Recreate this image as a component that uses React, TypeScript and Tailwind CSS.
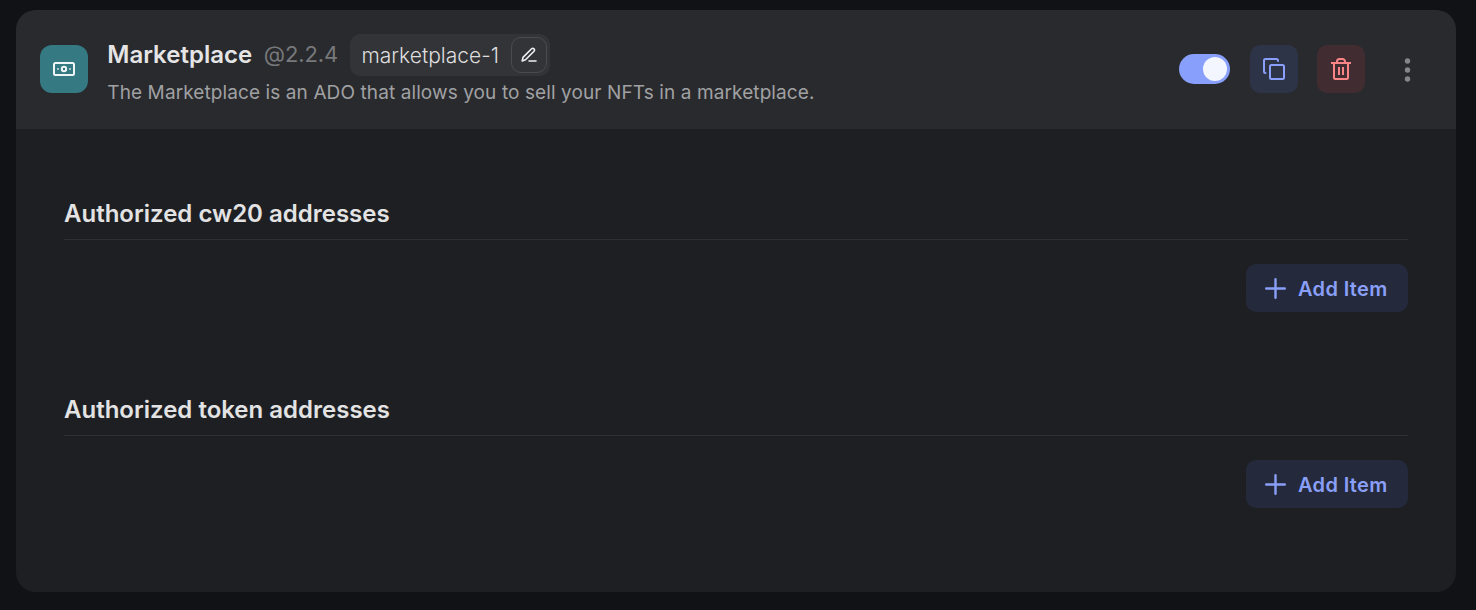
import type { ReactNode } from "react";

function Section({ title, children }: { title: string; children?: ReactNode }) {
  return (
    <section className="h-[196px]">
      <h2 className="h-[38px] border-b border-[#2f3033] text-[24px] leading-6 font-semibold text-[#e3e3e4]">
        {title}
      </h2>
      {children}
      <div className="mt-6 flex justify-end">
        <button className="flex h-12 w-[162px] items-center rounded-[10px] bg-[#242a3b] pl-[19px] text-[20px] font-semibold text-[#8a9ff9]">
          <svg width="21" height="21" viewBox="0 0 21 21" fill="none" stroke="currentColor" strokeWidth="2.4" strokeLinecap="round">
            <path d="M10.500 1.200v18.600M1.200 10.500h18.600" />
          </svg>
          <span className="ml-3 pt-px tracking-[0.35px] whitespace-nowrap">Add Item</span>
        </button>
      </div>
    </section>
  );
}

export default function App() {
  return (
    <main className="h-[610px] bg-[#111216] px-[16px] pt-[10px] pr-[20px] font-['Inter',sans-serif]">
      <div className="h-[582px] w-[1440px] overflow-hidden rounded-[20px] bg-[#1e1f23]">
        <header className="flex h-[119px] items-center bg-[#292a2d] pb-px pl-6">
          <div className="flex size-12 shrink-0 items-center justify-center rounded-[12px] bg-[#357983] text-[#eef5f5]">
            <svg width="22" height="14" viewBox="0 0 22 14" fill="none" stroke="currentColor" strokeWidth="2">
              <rect x="1" y="1" width="20" height="12" rx="1.5" />
              <circle cx="11" cy="7" r="2.2" />
              <path d="M4 7h2M16 7h2" strokeOpacity=".6" />
            </svg>
          </div>
          <div className="ml-[19.3px] h-[70px] flex-1">
            <div className="flex h-[42px] items-center">
              <h1 className="w-[144.5px] text-[24px] font-semibold whitespace-nowrap text-[#e5e5e6]">Marketplace</h1>
              <span className="ml-3 w-[74.5px] pb-px text-[22px] font-normal tracking-[-0.1px] whitespace-nowrap text-[#77787b]">@2.2.4</span>
              <div className="ml-[11.7px] flex h-[42px] w-[200px] items-center justify-between rounded-[10px] bg-[#333437] pr-[3px] pl-[11.5px]">
                <span className="pt-px text-[21px] font-light whitespace-nowrap text-[#dededf]">marketplace-1</span>
                <button aria-label="Edit name" className="flex size-9 items-center justify-center rounded-[10px] border border-[#4a4b4e] text-[#eeeeef]">
                  <svg width="16" height="16" viewBox="0 0 16 16" fill="none" stroke="currentColor" strokeWidth="1.6" strokeLinecap="round" strokeLinejoin="round">
                    <path d="M1.200 14l.8-3.600L10.600 1.800a1.700 1.700 0 0 1 2.400 2.400L4.500 12.800 1.200 14ZM8 14h7" />
                  </svg>
                </button>
              </div>
            </div>
            <p className="mt-[5px] text-[19px] leading-6 tracking-[0.1px] whitespace-nowrap text-[#a0a1a3]">
              The Marketplace is an ADO that allows you to sell your NFTs in a marketplace.
            </p>
          </div>
          <div className="flex items-center pr-[45px]">
            <button role="switch" aria-checked="true" aria-label="Enabled" className="flex h-[30px] w-[51px] items-center justify-end rounded-full bg-[#88a0fb] pr-[3px]">
              <span className="size-6 rounded-full bg-[#f3f5ff]" />
            </button>
            <button aria-label="Duplicate" className="ml-5 flex size-12 items-center justify-center rounded-[10px] bg-[#2e3447] text-[#8a9ffa]">
              <svg width="22" height="22" viewBox="0 0 22 22" fill="none" stroke="currentColor" strokeWidth="2" strokeLinecap="round" strokeLinejoin="round">
                <rect x="7" y="7" width="14" height="14" rx="1.5" />
                <path d="M2.500 15A1.500 1.500 0 0 1 1 13.500v-11A1.500 1.500 0 0 1 2.500 1h11A1.500 1.500 0 0 1 15 2.500V3" />
              </svg>
            </button>
            <button aria-label="Delete" className="ml-[19px] flex size-12 items-center justify-center rounded-[10px] bg-[#412d31] text-[#f98586]">
              <svg width="20" height="22" viewBox="0 0 20 22" fill="none" stroke="currentColor" strokeWidth="2" strokeLinejoin="round">
                <path d="M0 5h20M3 5v14.500A1.500 1.500 0 0 0 4.500 21h11a1.500 1.500 0 0 0 1.500-1.500V5M6 5V3.500A2.500 2.500 0 0 1 8.500 1h3A2.500 2.500 0 0 1 14 3.500V5M8 9v8M12 9v8" />
              </svg>
            </button>
            <button aria-label="More options" className="ml-[39px] pt-px text-[#85868a]">
              <svg width="7" height="24" viewBox="0 0 7 24" fill="currentColor">
                <circle cx="3.500" cy="3" r="2.700" /><circle cx="3.500" cy="12" r="2.700" /><circle cx="3.500" cy="21" r="2.700" />
              </svg>
            </button>
          </div>
        </header>
        <div className="px-12 pt-[73px]">
          <Section title="Authorized cw20 addresses" />
          <Section title="Authorized token addresses" />
        </div>
      </div>
    </main>
  );
}
